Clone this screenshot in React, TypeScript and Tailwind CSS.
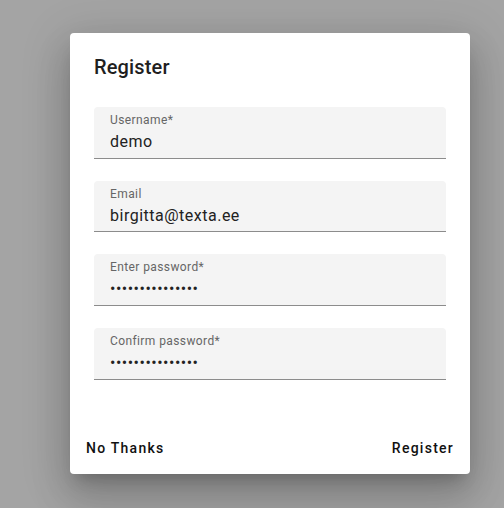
const fields = [
  { label: "Username*", value: "demo" },
  { label: "Email", value: "birgitta@texta.ee" },
  { label: "Enter password*", value: "•••••••••••••••" },
  { label: "Confirm password*", value: "•••••••••••••••" },
];

function FilledField({ label, value }: { label: string; value: string }) {
  return (
    <div className="flex h-[51.7px] flex-col rounded-t-[4px] border-b border-[#8c8c8c] bg-[#f4f4f4] px-4 pt-[5px]">
      <span className="text-[12px] leading-4 tracking-[0.4px] text-[#666666]">{label}</span>
      <span className="mt-[2px] text-[16px] leading-6 tracking-[0.5px] text-[#222222]">{value}</span>
    </div>
  );
}

export default function App() {
  return (
    <div
      className="flex min-h-screen items-start bg-[#a4a4a4] pl-[70px] pt-[33px]"
      style={{ fontFamily: "Roboto, 'Liberation Sans', sans-serif" }}
    >
      <div className="flex h-[441px] w-[400px] flex-col rounded-[4px] bg-white shadow-[0_11px_15px_-7px_rgba(0,0,0,0.2),0_24px_38px_3px_rgba(0,0,0,0.14),0_9px_46px_8px_rgba(0,0,0,0.12)]">
        <h2 className="px-6 pt-[18px] text-[20px] font-medium leading-8 tracking-[0.15px] text-[#1f1f1f]">Register</h2>

        <div className="mt-6 flex flex-col gap-[22px] px-6">
          {fields.map((field) => (
            <FilledField key={field.label} {...field} />
          ))}
        </div>

        <div className="mt-auto flex items-center justify-between px-2 pb-2">
          <button className="h-9 px-2 text-[14px] font-medium tracking-[1.25px] text-[#111111]">No Thanks</button>
          <button className="h-9 px-2 text-[14px] font-medium tracking-[1.25px] text-[#111111]">Register</button>
        </div>
      </div>
    </div>
  );
}
